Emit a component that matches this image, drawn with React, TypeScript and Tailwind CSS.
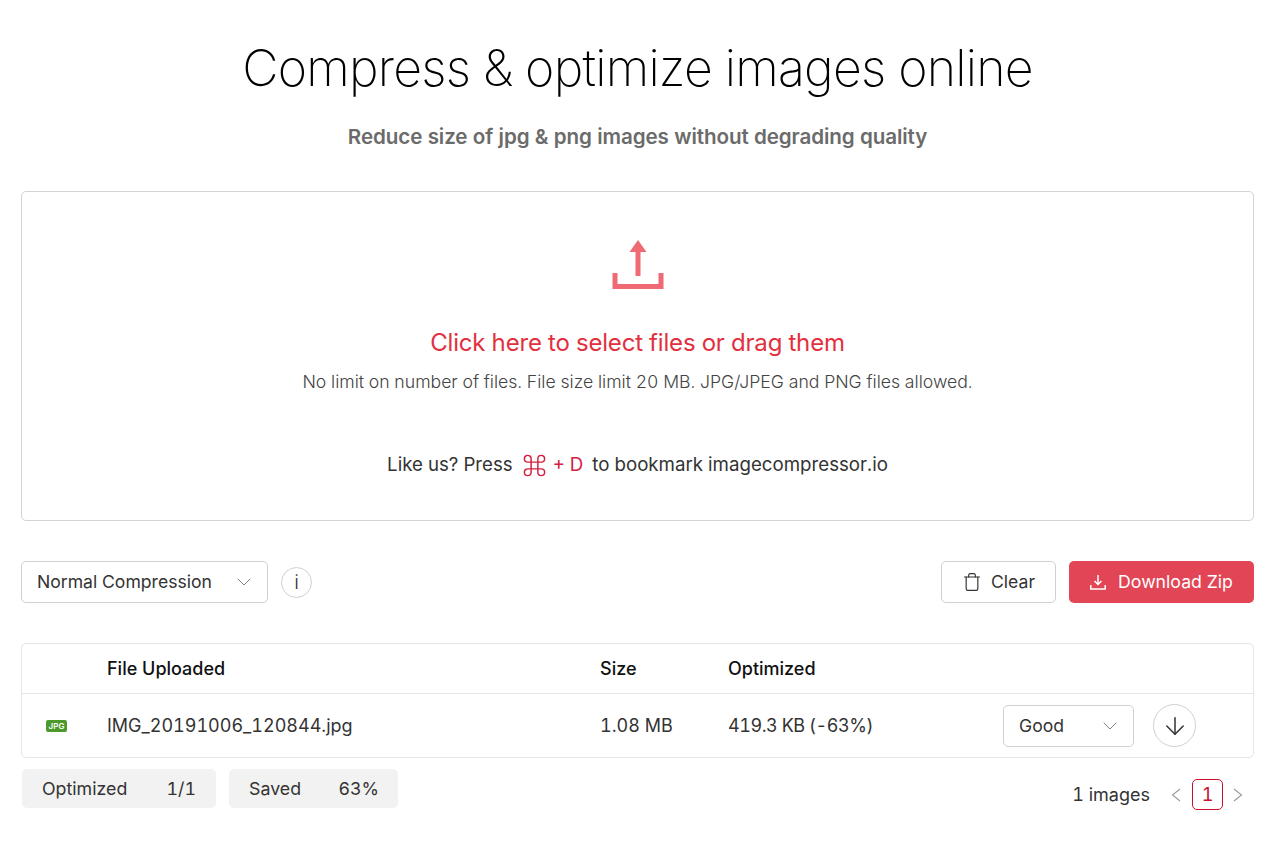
import { ChevronDown, ArrowDown, Trash, Command } from "lucide-react";

function UploadIcon() {
  return (
    <svg width="54" height="50" viewBox="0 0 54 50" className="block">
      <path d="M27 0 L35.5 12 L29.5 12 L29.5 36 L24.5 36 L24.5 12 L18.5 12 Z" fill="#f06a73" />
      <path d="M4 33 V46.5 H50 V33" fill="none" stroke="#f06a73" strokeWidth="5" />
    </svg>
  );
}

function DownloadIcon() {
  return (
    <svg width="16" height="16" viewBox="0 0 16 16" fill="none" stroke="#fff" strokeWidth="1.5" className="block">
      <path d="M8 1 V10 M4.5 7 L8 10.5 L11.5 7" />
      <path d="M0.8 11 V15 H15.2 V11" />
    </svg>
  );
}

function PageArrow({ d }: { d: string }) {
  return (
    <svg width="10" height="14" viewBox="0 0 10 14" fill="none" stroke="#999" strokeWidth="1.1" className="block">
      <path d={d} />
    </svg>
  );
}

function Select({ label, width }: { label: string; width: string }) {
  return (
    <div className={`${width} h-[42px] flex items-center justify-between pl-[15px] pr-[11px] bg-white border border-[#d0d0d0] rounded-[5px] text-[#333] text-[17.6px]`}>
      <span className="pt-px">{label}</span>
      <ChevronDown size={24} strokeWidth={0.9} className="text-[#777]" />
    </div>
  );
}

export default function App() {
  return (
    <div className="w-[1280px] h-[849px] overflow-hidden bg-white px-[21px] pr-[26px] font-['Inter',sans-serif] text-[#333] tabular-nums">
      <h1 className="pt-[37px] text-center text-[50px] leading-[62px] font-extralight text-black tracking-[-0.75px]">
        Compress &amp; optimize images online
      </h1>
      <p className="mt-[24px] text-center text-[20.6px] leading-[28px] font-semibold text-[#6b6b6b] tracking-[-0.1px]">
        Reduce size of jpg &amp; png images without degrading quality
      </p>

      <div className="mt-[40px] h-[330px] flex flex-col items-center border border-[#d4d4d4] rounded-[5px] pt-[48px]">
        <UploadIcon />
        <div className="mt-[35px] text-[24px] leading-[36px] text-[#e2303f] tracking-[-0.18px]">Click here to select files or drag them</div>
        <div className="mt-[8px] text-[17.65px] leading-[26px] text-[#444] font-light">
          No limit on number of files. File size limit 20 MB. JPG/JPEG and PNG files allowed.
        </div>
        <div className="mt-[56px] flex items-center text-[18.7px] leading-[28px] text-[#333]">
          <span>Like us? Press</span>
          <span className="ml-[8px] mr-[9px] flex items-center gap-[5px] text-[#d2213f]">
            <Command size={27} strokeWidth={1.3} />
            <span>+ D</span>
          </span>
          <span>to bookmark imagecompressor.io</span>
        </div>
      </div>

      <div className="mt-[40px] flex items-center justify-between">
        <div className="flex items-center gap-[13px]">
          <Select label="Normal Compression" width="w-[247px]" />
          <div className="w-[31px] h-[31px] rounded-full border border-[#d0d0d0] flex items-center justify-center text-[20px] font-light">i</div>
        </div>
        <div className="flex items-center gap-[13px]">
          <button className="w-[115px] h-[42px] flex items-center justify-center gap-[9px] bg-white border border-[#d0d0d0] rounded-[5px] text-[17.6px] text-[#333]">
            <Trash size={20} strokeWidth={1.4} />
            <span className="pt-px">Clear</span>
          </button>
          <button className="w-[185px] h-[42px] flex items-center justify-center gap-[12px] bg-[#e24555] rounded-[5px] text-[17.7px] text-white">
            <DownloadIcon />
            <span className="pt-px">Download Zip</span>
          </button>
        </div>
      </div>

      <div className="mt-[40px] h-[115px] border border-[#e6e6e6] rounded-[5px]">
        <div className="h-[50px] grid grid-cols-[85px_493px_128px_1fr] items-center border-b border-[#e6e6e6] text-[18px] font-medium text-[#111]">
          <span />
          <span>File Uploaded</span>
          <span>Size</span>
          <span>Optimized</span>
        </div>
        <div className="h-[63px] grid grid-cols-[85px_493px_128px_275px_1fr] items-center text-[18px] text-[#333]">
          <span className="pl-[24px]">
            <span className="block w-[21px] h-[12px] rounded-[2px] bg-[#4c9a2a] text-white text-[8px] leading-[12px] text-center font-semibold">JPG</span>
          </span>
          <span>IMG_20191006_120844.jpg</span>
          <span>1.08 MB</span>
          <span className="tracking-[-0.45px]">419.3 KB (-63%)</span>
          <div className="flex items-center gap-[19px]">
            <Select label="Good" width="w-[131px]" />
            <div className="w-[43px] h-[43px] rounded-full border border-[#d0d0d0] flex items-center justify-center">
              <ArrowDown size={28} strokeWidth={1.3} />
            </div>
          </div>
        </div>
      </div>

      <div className="mt-[11px] flex items-start justify-between">
        <div className="flex gap-[13px] pl-px text-[17.8px]">
          <div className="w-[194px] h-[39px] flex items-center justify-between pl-[20px] pr-[20px] pt-px bg-[#f2f2f2] rounded-[5px]">
            <span>Optimized</span>
            <span>1/1</span>
          </div>
          <div className="w-[169px] h-[39px] flex items-center justify-between pl-[20px] pr-[19px] pt-px bg-[#f2f2f2] rounded-[5px]">
            <span>Saved</span>
            <span>63%</span>
          </div>
        </div>
        <div className="flex items-center pt-[10px] pr-[11px] text-[18px]">
          <span>1 images</span>
          <span className="ml-[21px]"><PageArrow d="M9 1 L1.5 7 L9 13" /></span>
          <span className="ml-[11px] w-[31px] h-[31px] flex items-center justify-center border border-[#c8102e] rounded-[5px] text-[#c8102e]">1</span>
          <span className="ml-[10px]"><PageArrow d="M1 1 L8.5 7 L1 13" /></span>
        </div>
      </div>
    </div>
  );
}
